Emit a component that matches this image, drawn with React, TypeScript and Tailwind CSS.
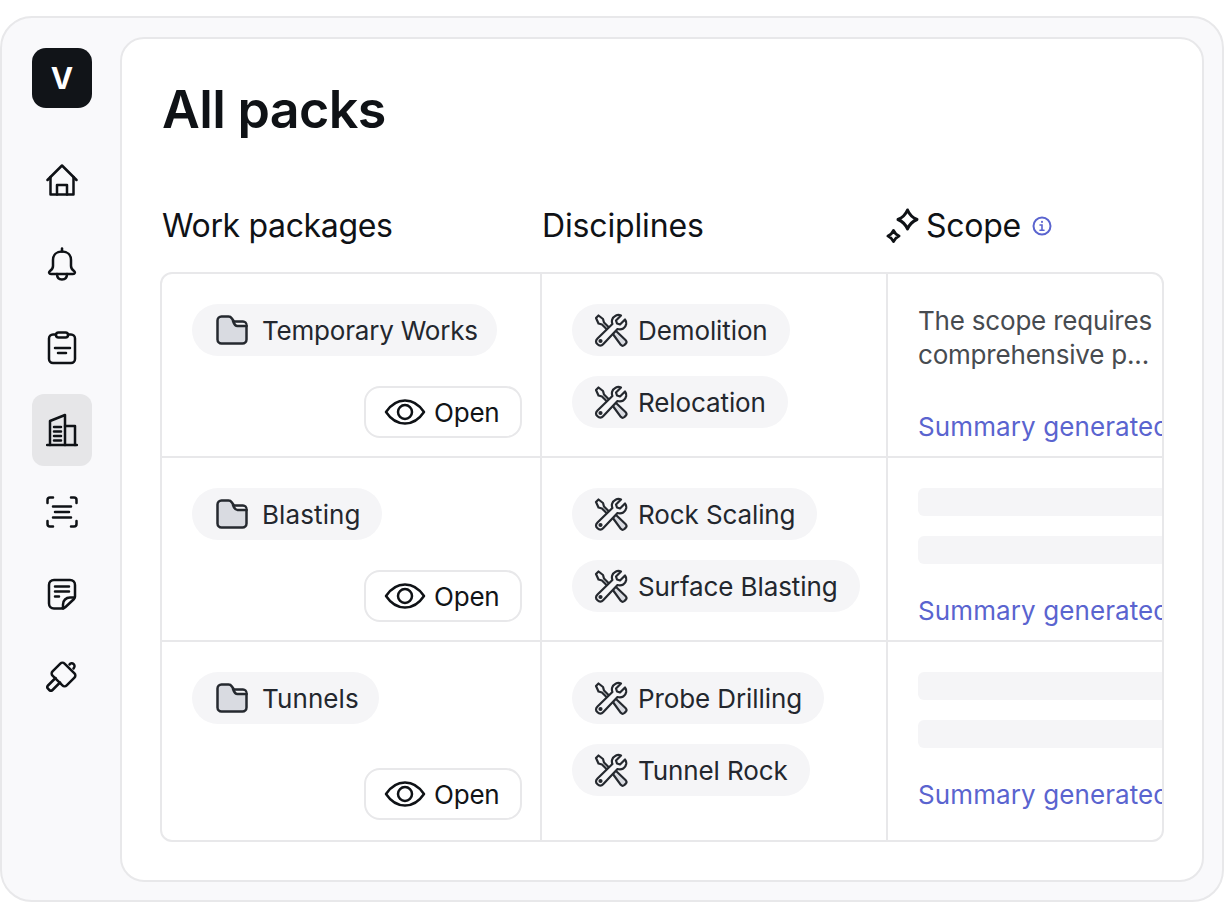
import * as React from "react";

const INK = "#0f1216";
const NAV_STROKE = 2.5;

type IconProps = { className?: string };

function HomeIcon({ className }: IconProps) {
  return (
    <svg viewBox="0 0 32 32" fill="none" stroke={INK} strokeWidth={NAV_STROKE} strokeLinejoin="round" strokeLinecap="round" className={className}>
      <path d="M1.5 16 16 1.500 30.500 16" />
      <path d="M4.500 13V30.500h23V13" />
      <path d="M11 30.500V21h10v9.500" />
    </svg>
  );
}

function BellIcon({ className }: IconProps) {
  return (
    <svg viewBox="0 0 32 34" fill="none" stroke={INK} strokeWidth={NAV_STROKE} strokeLinejoin="round" strokeLinecap="round" className={className}>
      <path d="M16 1.500v3" />
      <path d="M16 4.500c-5.500 0-9 3.500-9 8.500v6c0 2-1 3.500-3 5-1.500 1.200-1 3 1 3h22c2 0 2.500-1.800 1-3-2-1.500-3-3-3-5v-6c0-5-3.500-8.500-9-8.500Z" />
      <path d="M11 27c0 3.500 2 5.500 5 5.500s5-2 5-5.500" />
    </svg>
  );
}

function ClipboardIcon({ className }: IconProps) {
  return (
    <svg viewBox="0 0 32 34" fill="none" stroke={INK} strokeWidth={NAV_STROKE} strokeLinejoin="round" strokeLinecap="round" className={className}>
      <rect x="3" y="3.500" width="26" height="28.500" rx="4" />
      <rect x="10" y="1.500" width="12" height="5" rx="2.500" fill="#f9f9fb" />
      <path d="M9 17h15M12 22h8" />
    </svg>
  );
}

function BuildingIcon({ className }: IconProps) {
  return (
    <svg viewBox="0 0 32 34" fill="none" stroke={INK} strokeWidth={NAV_STROKE} strokeLinecap="round" strokeLinejoin="round" className={className}>
      <path d="M1 32h30" />
      <path d="M4 32V8l15-6v30" />
      <path d="M19 13h10v19" />
      <path d="M8 14h7M8 18.500h7M8 23h7M8 27.500h7" />
    </svg>
  );
}

function ScanIcon({ className }: IconProps) {
  return (
    <svg viewBox="0 0 32 32" fill="none" stroke={INK} strokeWidth={NAV_STROKE} strokeLinecap="round" strokeLinejoin="round" className={className}>
      <path d="M1.500 7V4c0-1.500 1-2.500 2.500-2.500h3M25 1.500h3c1.500 0 2.500 1 2.500 2.500v3M30.500 25v3c0 1.500-1 2.500-2.500 2.500h-3M7 30.500H4c-1.500 0-2.500-1-2.500-2.500v-3" />
      <path d="M7 10.500h18M9 16h14M7 21.500h18" />
    </svg>
  );
}

function NoteIcon({ className }: IconProps) {
  return (
    <svg viewBox="0 0 32 32" fill="none" stroke={INK} strokeWidth={NAV_STROKE} strokeLinecap="round" strokeLinejoin="round" className={className}>
      <path d="M15 30.500H8c-3 0-5-2-5-5V7c0-3 2-5 5-5h16c3 0 5 2 5 5v11.500c0 1-.4 1.800-1 2.500l-8.500 8c-1.200 1.200-3 1.500-4.500 1.500Z" />
      <path d="M28 19.500h-4c-4 0-7 3-7 7v4" />
      <path d="M9 8.500h14M9 13.500h14M9 18.500h4" />
    </svg>
  );
}

function HammerIcon({ className }: IconProps) {
  return (
    <svg viewBox="0 0 32 32" fill="none" stroke={INK} strokeWidth={NAV_STROKE} strokeLinecap="round" strokeLinejoin="round" className={className}>
      <rect x="7.500" y="6" width="20" height="17" rx="3" transform="rotate(45 17.500 14.500)" />
      <path d="M9.500 18 2 25.500a2.300 2.300 0 0 0 0 3.200l1.300 1.300a2.300 2.300 0 0 0 3.200 0L14 22.500" />
      <path d="M23.500 4.500c1-1.500 3-1.500 4.200-.3 1.200 1.200 1.100 3-.2 4.300" />
    </svg>
  );
}

function FolderIcon() {
  return (
    <svg viewBox="0 0 32 30" fill="none" className="h-[30px] w-8 shrink-0">
      <path d="M1.500 5.500c0-2.200 1.800-4 4-4h7c1.500 0 2.500.6 3.200 1.800L18 6.500h9c2 0 3.500 1.800 3.500 4v14c0 2.200-1.800 4-4 4h-21c-2.200 0-4-1.800-4-4v-19Z" fill="#d9dbe1" stroke="#25292f" strokeWidth={2.5} strokeLinejoin="round" />
      <path d="M18.500 8h9c1.200 0 2 .8 2.200 3h-9c-1 0-1.600-1.200-2.200-3Z" fill="#f5f5f7" />
      <path d="M17 6c1.200 3.500 2.500 5 4.500 5h9" stroke="#25292f" strokeWidth={2.5} strokeLinecap="round" />
    </svg>
  );
}

function ToolsIcon() {
  return (
    <svg viewBox="0 0 34 34" fill="none" stroke="#25292f" strokeWidth={2.2} strokeLinejoin="round" strokeLinecap="round" className="h-[34px] w-[34px] shrink-0">
      <path d="M2 5 4.500 2.500 9 6l1 3.500 6 6-2 2-6-6L4.500 10.500Z" />
      <path d="m18.500 20.500 3-3 10 9.500c1.300 1.300 1.300 2.500.3 3.600l-1.400 1.400c-1.100 1-2.500 1-3.600-.2Z" fill="#d9dbe1" />
      <path d="M31 6.500 26 11.500l-3-1-1-3L27 2.500c-3.500-1.500-8 .5-9 4.500-.3 1.500 0 3 .4 4L3.500 25.500c-2 2-2 4 0 5.800 1.800 1.800 4 1.800 5.600 0L23.500 16c4.500 1.200 8-1 8.700-5 .2-1.500 0-3.200-1.200-4.500Z" fill="#f5f5f7" />
      <circle cx="6.500" cy="28" r="1" />
    </svg>
  );
}

function EyeIcon() {
  return (
    <svg viewBox="0 0 42 28" fill="none" stroke={INK} strokeWidth={2.5} strokeLinejoin="round" className="h-7 w-[42px] shrink-0">
      <path d="M2 14C7 6.500 13 2.500 21 2.500S35 6.500 40 14c-5 7.500-11 11.500-19 11.500S7 21.500 2 14Z" />
      <circle cx="21" cy="14" r="7" />
    </svg>
  );
}

function SparkIcon() {
  return (
    <svg viewBox="0 0 34 36" fill="none" stroke={INK} strokeWidth={3} strokeLinejoin="round" className="h-9 w-[34px] shrink-0">
      <path d="M21.500 2Q24.300 8.700 31 11.500 24.300 14.300 21.500 21 18.700 14.300 12 11.500 18.700 8.700 21.500 2Z" />
      <path d="M7.500 22.500Q9.200 26.300 13 28 9.200 29.700 7.500 33.500 5.800 29.700 2 28 5.800 26.300 7.500 22.500Z" />
    </svg>
  );
}

function InfoIcon() {
  return (
    <svg viewBox="0 0 20 20" fill="none" stroke="#5a64cf" strokeWidth={2} strokeLinecap="round" className="h-5 w-5 shrink-0">
      <circle cx="10" cy="10" r="8.500" />
      <path d="M8 9h2v5M8 14.200h4" strokeWidth={1.6} />
      <path d="M10 5.800v.2" />
    </svg>
  );
}

const NAV = [
  { icon: HomeIcon, size: "h-8 w-8", box: "mt-[36px]" },
  { icon: BellIcon, size: "h-[34px] w-8", box: "mt-[12px]" },
  { icon: ClipboardIcon, size: "h-[34px] w-8", box: "mt-[12px]" },
  { icon: BuildingIcon, size: "h-[34px] w-8", box: "mt-[10px] rounded-xl bg-[#e6e6e8]" },
  { icon: ScanIcon, size: "h-8 w-8", box: "mt-[10px]" },
  { icon: NoteIcon, size: "h-8 w-8", box: "mt-[10px]" },
  { icon: HammerIcon, size: "h-8 w-8", box: "mt-[10px]" },
];

function Sidebar() {
  return (
    <aside className="flex w-[118px] shrink-0 flex-col pl-[30px] pt-[30px]">
      <div className="flex h-[60px] w-[60px] items-center justify-center rounded-[14px] bg-[#111418] text-[30px] font-bold text-white">
        V
      </div>
      {NAV.map(({ icon: Icon, size, box }, i) => (
        <div key={i} className={`flex h-[72px] w-[60px] items-center justify-center ${box}`}>
          <Icon className={size} />
        </div>
      ))}
    </aside>
  );
}

function Pill({ icon, label, className }: { icon: React.ReactNode; label: string; className: string }) {
  return (
    <div className={`flex h-[52px] w-fit items-center whitespace-nowrap rounded-full bg-[#f5f5f7] text-[26px] text-[#23272e] ${className}`}>
      {icon}
      <span>{label}</span>
    </div>
  );
}

function OpenButton() {
  return (
    <button type="button" className="ml-auto flex h-[52px] w-[158px] items-center gap-2 rounded-2xl border-2 border-[#e8e8ea] bg-white pl-[18px] text-[26px] tracking-[-0.2px] text-[#111418]">
      <EyeIcon />
      Open
    </button>
  );
}

const ROWS = [
  { name: "Temporary Works", pill: "pr-[19px] tracking-[-0.2px]", disciplines: ["Demolition", "Relocation"], height: "h-[182px]", gap: "mt-[30px]", ready: true },
  { name: "Blasting", pill: "pr-[21px] tracking-[0.1px]", disciplines: ["Rock Scaling", "Surface Blasting"], height: "h-[184px]", gap: "mt-[30px]", ready: false },
  { name: "Tunnels", pill: "pr-[20px] tracking-[0.1px]", disciplines: ["Probe Drilling", "Tunnel Rock"], height: "h-[200px]", gap: "mt-[44px]", ready: false },
];

function ScopeCell({ ready }: { ready: boolean }) {
  return (
    <div className="flex min-w-0 flex-1 flex-col overflow-hidden pl-[30px] pt-[30px]">
      <div className="h-[76px] shrink-0">
        {ready ? (
          <p className="w-[240px] text-[26px] leading-[34px] tracking-[-0.2px] text-[#474b50]">
            The scope requires comprehensive p...
          </p>
        ) : (
          <div className="flex flex-col gap-5">
            <div className="h-7 w-[300px] rounded-md bg-[#f5f5f7]" />
            <div className="h-7 w-[300px] rounded-md bg-[#f5f5f7]" />
          </div>
        )}
      </div>
      <div className="mt-[30px] whitespace-nowrap text-[26px] leading-[34px] tracking-[0.1px] text-[#5a64cf]">
        Summary generated by AI
      </div>
    </div>
  );
}

export default function App() {
  return (
    <div className="h-[920px] w-[1231px] bg-white pt-4 font-['Inter',sans-serif]">
      <div className="flex h-[886px] w-[1224px] rounded-[32px] border-2 border-[#e8e8ea] bg-[#f9f9fb]">
        <Sidebar />
        <main className="mt-[19px] h-[845px] w-[1084px] rounded-3xl border-2 border-[#e8e8ea] bg-white pl-[38px] pr-[38px] pt-[35px]">
          <h1 className="ml-[2px] text-[52px] font-semibold leading-[72px] tracking-[-0.65px] text-[#0f1216]">All packs</h1>
          <div className="ml-[2px] mt-[52px] flex h-[56px] items-center text-[32px] leading-10 text-[#0f1216]">
            <div className="w-[380px] tracking-[-0.35px]">Work packages</div>
            <div className="w-[344px] tracking-[-0.15px]">Disciplines</div>
            <div className="flex items-center gap-[6px] tracking-[-0.25px]">
              <SparkIcon />
              Scope
              <span className="ml-[5px]"><InfoIcon /></span>
            </div>
          </div>
          <div className="mt-[18px] overflow-hidden rounded-xl border-2 border-[#e8e8ea]">
            {ROWS.map((row, i) => (
              <div key={row.name} className={`flex ${row.height} ${i > 0 ? "border-t-2 border-[#e8e8ea]" : ""}`}>
                <div className="flex w-[380px] shrink-0 flex-col border-r-2 border-[#e8e8ea] pl-[30px] pr-[18px] pt-[30px]">
                  <Pill icon={<FolderIcon />} label={row.name} className={`gap-[14px] pl-6 ${row.pill}`} />
                  <div className={row.gap}><OpenButton /></div>
                </div>
                <div className="flex w-[346px] shrink-0 flex-col gap-5 border-r-2 border-[#e8e8ea] pl-[30px] pt-[30px]">
                  {row.disciplines.map((d) => (
                    <Pill key={d} icon={<ToolsIcon />} label={d} className="gap-[10px] pl-[22px] pr-[22px] tracking-[-0.1px]" />
                  ))}
                </div>
                <ScopeCell ready={row.ready} />
              </div>
            ))}
          </div>
        </main>
      </div>
    </div>
  );
}
